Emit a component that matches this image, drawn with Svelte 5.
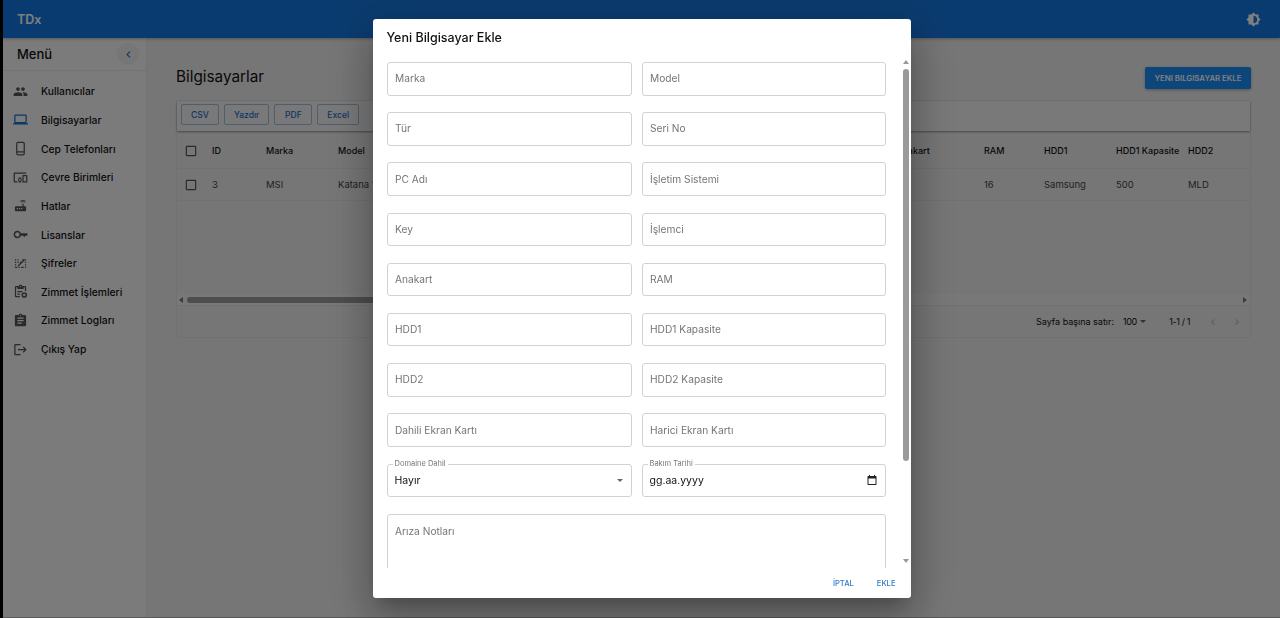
<script>
  const icons = {
    people: 'M16 11c1.66 0 2.99-1.34 2.99-3S17.66 5 16 5c-1.66 0-3 1.34-3 3s1.34 3 3 3zm-8 0c1.66 0 2.99-1.34 2.99-3S9.66 5 8 5C6.34 5 5 6.34 5 8s1.34 3 3 3zm0 2c-2.33 0-7 1.17-7 3.5V19h14v-2.5c0-2.33-4.67-3.5-7-3.5zm8 0c-.29 0-.62.02-.97.05 1.16.84 1.97 1.97 1.97 3.45V19h6v-2.5c0-2.33-4.67-3.5-7-3.5z',
    laptop: 'M20 18c1.1 0 1.99-.9 1.99-2L22 6c0-1.1-.9-2-2-2H4c-1.1 0-2 .9-2 2v10c0 1.1.9 2 2 2H0v2h24v-2h-4zM4 6h16v10H4V6z',
    phone: 'M16 1H8C6.34 1 5 2.34 5 4v16c0 1.66 1.34 3 3 3h8c1.66 0 3-1.34 3-3V4c0-1.66-1.34-3-3-3zm1 15.5H7V4c0-.55.45-1 1-1h8c.55 0 1 .45 1 1v12.5zM17 20c0 .55-.45 1-1 1H8c-.55 0-1-.45-1-1v-1.5h10V20z',
    devices: 'M3 6h18V4H3c-1.1 0-2 .9-2 2v12c0 1.1.9 2 2 2h4v-2H3V6zm10 6H9v1.78c-.61.55-1 1.33-1 2.22s.39 1.67 1 2.22V20h4v-1.78c.61-.55 1-1.34 1-2.22s-.39-1.67-1-2.22V12zm-2 5.5c-.83 0-1.5-.67-1.5-1.5s.67-1.5 1.5-1.5 1.5.67 1.5 1.5-.67 1.5-1.5 1.5zM22 8h-6c-.5 0-1 .5-1 1v10c0 .5.5 1 1 1h6c.5 0 1-.5 1-1V9c0-.5-.5-1-1-1zm-1 10h-4v-8h4v8z',
    router: 'M20.2 5.9l.8-.8C19.6 3.7 17.8 3 16 3s-3.6.7-5 2.1l.8.8C13 4.8 14.5 4.2 16 4.2s3 .6 4.2 1.7zm-.9.8c-.9-.9-2.1-1.4-3.3-1.4s-2.4.5-3.3 1.4l.8.8c.7-.7 1.6-1 2.5-1 .9 0 1.8.3 2.5 1l.8-.8zM19 13h-2V9h-2v4H5c-1.1 0-2 .9-2 2v4c0 1.1.9 2 2 2h14c1.1 0 2-.9 2-2v-4c0-1.1-.9-2-2-2zM8 18H6v-2h2v2zm3.5 0h-2v-2h2v2zm3.5 0h-2v-2h2v2z',
    key: 'M12.65 10C11.83 7.67 9.61 6 7 6c-3.31 0-6 2.69-6 6s2.69 6 6 6c2.61 0 4.83-1.67 5.65-4H17v2h2v-2h4v-4H12.65zM7 15.5c-1.93 0-3.5-1.57-3.5-3.5S5.07 8.5 7 8.5s3.5 1.57 3.5 3.5-1.57 3.5-3.5 3.5z',
    password: 'M3 5h2v2H3zM7 5h2v2H7zM3 9h2v2H3zM7 9h2v2H7zM11 9h2v2h-2zM15 5h2v2h-2zM19 5h2v2h-2zM19 9h2v2h-2zM3 17h4v2H3zM9 17h2v2H9zM13 17h4v2h-4zM19 13h2v2h-2zM19 17h2v2h-2zM3 13h2v2H3zM7.4 15.2 17.8 4.8l1.4 1.4L8.8 16.6z',
    assignSettings: 'M19 3h-4.18C14.4 1.84 13.3 1 12 1c-1.3 0-2.4.84-2.82 2H5c-1.1 0-2 .9-2 2v14c0 1.1.9 2 2 2h6v-2H5V5h2v3h10V5h2v6h2V5c0-1.1-.9-2-2-2zm-7 2c-.55 0-1-.45-1-1s.45-1 1-1 1 .45 1 1-.45 1-1 1zM7 11h8v2H7zM7 15h4v2H7zM18 13a4.5 4.5 0 1 0 0 9 4.5 4.5 0 0 0 0-9zm0 6.5a2 2 0 1 1 0-4 2 2 0 0 1 0 4z',
    assignment: 'M19 3h-4.18C14.4 1.84 13.3 1 12 1c-1.3 0-2.4.84-2.82 2H5c-1.1 0-2 .9-2 2v14c0 1.1.9 2 2 2h14c1.1 0 2-.9 2-2V5c0-1.1-.9-2-2-2zm-7 0c.55 0 1 .45 1 1s-.45 1-1 1-1-.45-1-1 .45-1 1-1zm2 14H7v-2h7v2zm3-4H7v-2h10v2zm0-4H7V7h10v2z',
    logout: 'M17 7l-1.41 1.41L18.17 11H8v2h10.17l-2.58 2.58L17 17l5-5zM4 5h8V3H4c-1.1 0-2 .9-2 2v14c0 1.1.9 2 2 2h8v-2H4V5z'
  };

  const menu = [
    { label: 'Kullanıcılar', icon: 'people' },
    { label: 'Bilgisayarlar', icon: 'laptop', active: true },
    { label: 'Cep Telefonları', icon: 'phone' },
    { label: 'Çevre Birimleri', icon: 'devices' },
    { label: 'Hatlar', icon: 'router' },
    { label: 'Lisanslar', icon: 'key' },
    { label: 'Şifreler', icon: 'password' },
    { label: 'Zimmet İşlemleri', icon: 'assignSettings' },
    { label: 'Zimmet Logları', icon: 'assignment' },
    { label: 'Çıkış Yap', icon: 'logout' }
  ];

  const columns = [
    { name: 'ID', width: 54, value: '3' },
    { name: 'Marka', width: 72, value: 'MSI' },
    { name: 'Model', width: 72, value: 'Katana 15' },
    { name: 'Tür', width: 81, value: '' },
    { name: 'Seri No', width: 81, value: '' },
    { name: 'PC Adı', width: 81, value: '' },
    { name: 'İşletim Sistemi', width: 81, value: '' },
    { name: 'Key', width: 81, value: '' },
    { name: 'İşlemci', width: 81, value: '' },
    { name: 'Anakart', width: 88, value: '' },
    { name: 'RAM', width: 60, value: '16' },
    { name: 'HDD1', width: 72, value: 'Samsung' },
    { name: 'HDD1 Kapasite', width: 72, value: '500' },
    { name: 'HDD2', width: 62, value: 'MLD' }
  ];

  const fields = [
    'Marka', 'Model', 'Tür', 'Seri No', 'PC Adı', 'İşletim Sistemi', 'Key', 'İşlemci',
    'Anakart', 'RAM', 'HDD1', 'HDD1 Kapasite', 'HDD2', 'HDD2 Kapasite',
    'Dahili Ekran Kartı', 'Harici Ekran Kartı'
  ];
</script>

{#snippet checkbox()}
  <svg class="check" viewBox="0 0 24 24"><path d="M19 5v14H5V5h14m0-2H5c-1.1 0-2 .9-2 2v14c0 1.1.9 2 2 2h14c1.1 0 2-.9 2-2V5c0-1.1-.9-2-2-2z" /></svg>
{/snippet}

<div class="shell">
  <header class="appbar">
    <span class="brand">TDx</span>
    <svg class="theme" viewBox="0 0 24 24"><path d="M20 15.31L23.31 12 20 8.69V4h-4.69L12 .69 8.69 4H4v4.69L.69 12 4 15.31V20h4.69L12 23.31 15.31 20H20v-4.69zM12 18V6c3.31 0 6 2.69 6 6s-2.69 6-6 6z" /></svg>
  </header>

  <div class="body">
    <aside class="sidebar">
      <div class="menu-head">
        <span>Menü</span>
        <button class="collapse" aria-label="Daralt">
          <svg viewBox="0 0 24 24"><path d="M15.41 7.41 14 6l-6 6 6 6 1.41-1.41L10.83 12z" /></svg>
        </button>
      </div>
      <nav>
        {#each menu as item}
          <div class="menu-item" class:active={item.active}>
            <svg viewBox="0 0 24 24"><path d={icons[item.icon]} /></svg>
            <span>{item.label}</span>
          </div>
        {/each}
      </nav>
    </aside>

    <main class="main">
      <div class="page-head">
        <h1>Bilgisayarlar</h1>
        <button class="add">YENI BILGISAYAR EKLE</button>
      </div>

      <section class="grid-card">
        <div class="toolbar">
          <button>CSV</button>
          <button>Yazdır</button>
          <button>PDF</button>
          <button>Excel</button>
        </div>
        <div class="table-scroll">
          <div class="rows">
            <div class="row head">
              <div class="cell box">{@render checkbox()}</div>
              {#each columns as col}
                <div class="cell" style="width:{col.width}px">{col.name}</div>
              {/each}
            </div>
            <div class="row">
              <div class="cell box">{@render checkbox()}</div>
              {#each columns as col}
                <div class="cell" style="width:{col.width}px">{col.value}</div>
              {/each}
            </div>
          </div>
          <div class="hbar">
            <i class="tri left"></i>
            <div class="hthumb"></div>
            <i class="tri right"></i>
          </div>
        </div>
        <div class="pager">
          <span>Sayfa başına satır:</span>
          <span class="size">100 <i class="caret"></i></span>
          <span class="range">1-1 / 1</span>
          <svg viewBox="0 0 24 24"><path d="M15.41 7.41 14 6l-6 6 6 6 1.41-1.41L10.83 12z" /></svg>
          <svg viewBox="0 0 24 24"><path d="M10 6 8.59 7.41 13.17 12l-4.58 4.59L10 18l6-6z" /></svg>
        </div>
      </section>
    </main>
  </div>
</div>

<div class="backdrop">
  <div class="dialog">
    <h2>Yeni Bilgisayar Ekle</h2>
    <div class="content">
      <div class="form">
        {#each fields as field}
          <input type="text" placeholder={field} />
        {/each}
        <fieldset>
          <legend>Domaine Dahil</legend>
          <span>Hayır</span>
          <i class="caret"></i>
        </fieldset>
        <fieldset class="date">
          <legend>Bakım Tarihi</legend>
          <span>gg.aa.yyyy</span>
          <svg viewBox="0 0 24 24"><path d="M19 4h-1V2h-2v2H8V2H6v2H5c-1.1 0-2 .9-2 2v14c0 1.1.9 2 2 2h14c1.1 0 2-.9 2-2V6c0-1.1-.9-2-2-2zm0 16H5V9h14v11z" /></svg>
        </fieldset>
        <textarea placeholder="Arıza Notları"></textarea>
      </div>
      <div class="vbar">
        <i class="tri up"></i>
        <div class="vthumb"></div>
        <i class="tri down"></i>
      </div>
    </div>
    <div class="actions">
      <button>İPTAL</button>
      <button>EKLE</button>
    </div>
  </div>
</div>

<style>
  :global(body) {
    background: #000;
    font-family: 'Inter', 'Liberation Sans', sans-serif;
    overflow: hidden;
  }

  button {
    font: inherit;
    background: none;
    border: none;
    padding: 0;
    cursor: pointer;
  }

  .shell {
    margin-left: 3px;
    height: 618px;
    box-sizing: border-box;
    border-bottom: 1px solid #b4b4b4;
    display: flex;
    flex-direction: column;
    background: #ececec;
    color: #222;
  }

  /* Top bar */
  .appbar {
    height: 38px;
    flex: none;
    display: flex;
    align-items: center;
    justify-content: space-between;
    padding: 0 19px 0 14px;
    background: #1577e0;
    box-shadow: 0 1px 3px rgba(0, 0, 0, 0.3);
    position: relative;
    z-index: 1;
  }

  .brand {
    color: #fff;
    font-size: 12.5px;
    font-weight: 600;
  }

  .theme {
    width: 15px;
    height: 15px;
    fill: #fff;
  }

  .body {
    flex: 1;
    display: flex;
    min-height: 0;
  }

  /* Sidebar */
  .sidebar {
    width: 144px;
    flex: none;
    background: #f7f7f7;
    border-right: 1px solid #e2e2e2;
    box-sizing: border-box;
  }

  .menu-head {
    height: 32px;
    display: flex;
    align-items: center;
    justify-content: space-between;
    padding: 0 7px 0 14px;
    border-bottom: 1px solid #e6e6e6;
    font-size: 13px;
    font-weight: 500;
    color: #111;
  }

  .collapse {
    width: 22px;
    height: 22px;
    border-radius: 50%;
    background: #ececec;
    display: flex;
    align-items: center;
    justify-content: center;
  }

  .collapse svg {
    width: 13px;
    height: 13px;
    fill: #1b6fc9;
  }

  nav {
    padding-top: 6px;
  }

  .menu-item {
    height: 28.65px;
    display: flex;
    align-items: center;
    padding-left: 9.5px;
    gap: 13.5px;
    font-size: 10.3px;
    font-weight: 500;
    color: #111;
  }

  .menu-item svg {
    width: 15px;
    height: 15px;
    flex: none;
    fill: #555;
  }

  .menu-item.active svg {
    fill: #1b6fc9;
  }

  /* Main */
  .main {
    flex: 1;
    min-width: 0;
    padding: 29px 29px 0 29px;
  }

  .page-head {
    display: flex;
    justify-content: space-between;
    align-items: center;
    height: 22px;
    margin-bottom: 11px;
  }

  h1 {
    margin: 0;
    padding-bottom: 4px;
    font-size: 15.3px;
    font-weight: 400;
    color: #111;
  }

  .add {
    width: 106px;
    height: 22px;
    border-radius: 2px;
    background: #1a8cf5;
    color: #fff;
    font-size: 7.8px;
    font-weight: 600;
    white-space: nowrap;
    box-shadow: 0 1px 3px rgba(0, 0, 0, 0.3);
  }

  .grid-card {
    border: 1px solid #e2e2e2;
    border-radius: 3px;
  }

  .toolbar {
    height: 30px;
    box-sizing: border-box;
    padding: 0 4px 3px;
    display: flex;
    align-items: center;
    gap: 5px;
    background: #f2f2f2;
    box-shadow: 0 1px 2px rgba(0, 0, 0, 0.4);
    position: relative;
  }

  .toolbar button {
    height: 21px;
    padding: 0 9px;
    min-width: 38px;
    box-sizing: border-box;
    border: 1px solid #9fbbd8;
    border-radius: 2px;
    color: #1b6fc9;
    font-size: 8.5px;
    font-weight: 500;
  }

  .table-scroll {
    height: 175px;
    display: flex;
    flex-direction: column;
    border-bottom: 1px solid #e2e2e2;
    box-sizing: border-box;
  }

  .rows {
    flex: 1;
    min-height: 0;
    overflow: hidden;
  }

  .row {
    display: flex;
    width: max-content;
    height: 32px;
    box-sizing: border-box;
    align-items: center;
    border-bottom: 1px solid #e2e2e2;
    font-size: 9.5px;
    color: #444;
  }

  .row.head {
    height: 38px;
    padding-top: 2px;
    font-size: 9px;
    color: #111;
    font-weight: 500;
  }

  .cell {
    flex: none;
    white-space: nowrap;
    overflow: hidden;
    box-sizing: border-box;
    padding-right: 6px;
  }

  .cell.box {
    width: 35px;
    padding-left: 7px;
    display: flex;
    align-items: center;
  }

  .check {
    width: 14px;
    height: 14px;
    fill: #555;
  }

  .hbar {
    height: 11px;
    flex: none;
    display: flex;
    align-items: center;
    justify-content: space-between;
    padding: 0 3px 0 2px;
    background: #f0f0f0;
  }

  .hthumb {
    width: 620px;
    height: 6px;
    margin: 0 auto 0 4px;
    border-radius: 3px;
    background: #9a9a9a;
  }

  .tri {
    display: block;
    flex: none;
    width: 0;
    height: 0;
    border: 3.5px solid transparent;
  }

  .tri.left {
    border-left: 0;
    border-right: 4px solid #777;
  }

  .tri.right {
    border-right: 0;
    border-left: 4px solid #777;
  }

  .tri.up {
    border-top: 0;
    border-bottom: 4px solid #999;
  }

  .tri.down {
    border-bottom: 0;
    border-top: 4px solid #999;
  }

  .pager {
    height: 31px;
    display: flex;
    align-items: center;
    justify-content: flex-end;
    font-size: 9px;
    color: #111;
    padding-right: 1px;
  }

  .size {
    margin-left: 9px;
    display: inline-flex;
    align-items: center;
    gap: 3.5px;
    letter-spacing: -0.4px;
  }

  .range {
    margin: 0 11px 0 23px;
    letter-spacing: -0.4px;
  }

  .pager svg {
    width: 12px;
    height: 12px;
    margin: 0 6px;
    fill: #bbb;
  }

  .caret {
    display: inline-block;
    width: 0;
    height: 0;
    border: 3px solid transparent;
    border-top: 3px solid #666;
    border-bottom: 0;
  }

  /* Modal */
  .backdrop {
    position: fixed;
    inset: 0;
    z-index: 10;
    padding: 0 0 1px 3px;
    background: rgba(0, 0, 0, 0.5);
    display: flex;
    align-items: center;
    justify-content: center;
  }

  .dialog {
    width: 538px;
    height: 579px;
    background: #fff;
    border-radius: 3px;
    display: flex;
    flex-direction: column;
    box-shadow: 0 11px 15px -7px rgba(0, 0, 0, 0.2), 0 24px 38px 3px rgba(0, 0, 0, 0.16), 0 9px 46px 8px rgba(0, 0, 0, 0.16);
  }

  h2 {
    margin: 0;
    height: 33px;
    flex: none;
    box-sizing: border-box;
    padding: 11px 14px 0;
    font-size: 12.5px;
    font-weight: 500;
    color: #111;
  }

  .content {
    flex: 1;
    min-height: 0;
    display: flex;
    overflow: hidden;
  }

  .form {
    flex: 1;
    display: grid;
    grid-template-columns: 245px 244px;
    column-gap: 10px;
    row-gap: 16.7px;
    grid-auto-rows: 33.5px;
    align-content: start;
    padding: 10px 14px 0;
  }

  .vbar {
    width: 10px;
    flex: none;
    display: flex;
    flex-direction: column;
    align-items: center;
    padding: 8px 0 5px;
    box-sizing: border-box;
  }

  .vthumb {
    width: 6px;
    height: 392px;
    margin-top: 5px;
    margin-bottom: auto;
    border-radius: 3px;
    background: #9a9a9a;
  }

  input,
  textarea {
    font: inherit;
    font-size: 10.2px;
    width: 100%;
    box-sizing: border-box;
    border: 1px solid #d2d2d2;
    border-radius: 3px;
    padding: 0 7.5px 1px;
    outline: none;
    color: #111;
  }

  input::placeholder,
  textarea::placeholder {
    color: #757575;
    opacity: 1;
  }

  textarea {
    grid-column: 1 / 3;
    height: 118px;
    padding-top: 10px;
    resize: none;
    display: block;
  }

  fieldset {
    margin: 0;
    min-width: 0;
    padding: 0 8px 0 3px;
    border: 1px solid #d2d2d2;
    border-radius: 3px;
    display: flex;
    align-items: center;
    justify-content: space-between;
    font-size: 10.5px;
    color: #111;
    height: 33.5px;
    box-sizing: border-box;
  }

  fieldset.date {
    padding-right: 7px;
  }

  fieldset span {
    margin-left: 4px;
  }

  legend {
    font-size: 7.5px;
    line-height: 0;
    padding: 0 2px;
    margin-left: 2px;
    color: #777;
  }

  fieldset svg {
    width: 12px;
    height: 12px;
    fill: #222;
  }

  .actions {
    height: 30px;
    flex: none;
    display: flex;
    justify-content: flex-end;
    align-items: center;
    gap: 23px;
    padding: 0 15px 0 0;
  }

  .actions button {
    color: #2b7cc9;
    font-size: 7.6px;
    font-weight: 500;
  }
</style>
